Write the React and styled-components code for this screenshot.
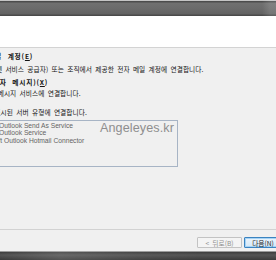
import React from "react";
import styled, { createGlobalStyle } from "styled-components";

const Global = createGlobalStyle`
  html, body { margin: 0; padding: 0; width: 276px; height: 260px; overflow: hidden; background: #f0f0f0; }
  #root { width: 276px; height: 260px; }
`;

const Window = styled.div`
  width: 276px;
  height: 260px;
  display: flex;
  flex-direction: column;
  overflow: hidden;
  font-family: "Noto Sans CJK KR", "Noto Sans", sans-serif;
  color: #1f1f1f;
`;

const TitleBar = styled.div`
  height: 16px;
  flex: none;
  background:
    linear-gradient(to right, rgba(255,255,255,0) 0, rgba(255,255,255,0) 262px, rgba(255,255,255,0.12) 270px, rgba(255,255,255,0.12) 276px),
    linear-gradient(to bottom, #c4c4c4 0, #c4c4c4 1px, #4c4c4c 1px, #4c4c4c 2px, #707070 3px, #6a6a6a 9px, #626262 14px, #4a4a4a 15px, #4a4a4a 16px);
`;

const Header = styled.div`
  height: 31px;
  flex: none;
  background: #ffffff;
  border-bottom: 1px solid #d3d3d3;
`;

const Body = styled.div`
  position: relative;
  flex: 1;
  display: flex;
  flex-direction: column;
  padding-top: 3px;
  background: #f0f0f0;
`;

const Line = styled.div`
  white-space: nowrap;
  font-size: 6.7px;
  line-height: 10px;
  height: 10px;
  word-spacing: ${(p) => (p.$bold ? "0.5em" : "0.26em")};
  letter-spacing: ${(p) => (p.$bold ? "0.8px" : "0.05px")};
  font-weight: ${(p) => (p.$bold ? 700 : 400)};
  margin-left: ${(p) => p.$offset}px;
  margin-top: ${(p) => p.$gap || 0}px;
  color: #141414;
`;

const Key = styled.span`
  text-decoration: underline;
`;

const ListBox = styled.div`
  margin-top: 3px;
  margin-left: -30px;
  width: 208px;
  height: 47px;
  box-sizing: border-box;
  border: 1px solid #a7b4c5;
  padding: 0.5px 0 0 29px;
  display: flex;
  flex-direction: column;
`;

const Item = styled.div`
  white-space: nowrap;
  font-family: "Liberation Sans", Arial, sans-serif;
  font-size: 6.7px;
  line-height: 7.5px;
  height: 7.5px;
  color: #646464;
  margin-left: ${(p) => p.$offset || 0}px;
`;

const Watermark = styled.div`
  position: absolute;
  left: 100px;
  top: 73px;
  font-family: "Liberation Sans", Arial, sans-serif;
  font-size: 12.6px;
  color: #8e8e8e;
  letter-spacing: 0.1px;
`;

const Footer = styled.div`
  flex: none;
  height: 22px;
  box-sizing: border-box;
  border-top: 1px solid #d2d2d2;
  display: flex;
  align-items: flex-start;
  gap: 2px;
  padding: 7px 0 0 197px;
  background: #f0f0f0;
`;

const Button = styled.div`
  flex: none;
  width: 45px;
  height: 11px;
  box-sizing: border-box;
  display: flex;
  align-items: center;
  justify-content: center;
  font-size: 6.7px;
  word-spacing: 0.26em;
  white-space: nowrap;
  border: 1px solid ${(p) => (p.$primary ? "#3b83c0" : "#c3c3c3")};
  border-radius: 1px;
  color: ${(p) => (p.$primary ? "#1e1e1e" : "#8e8e8e")};
  background: ${(p) =>
    p.$primary
      ? "linear-gradient(to bottom, #eaf4fc, #d5e8f7)"
      : "#f4f4f4"};
  box-shadow: ${(p) => (p.$primary ? "inset 0 0 0 1px #a6d3f5" : "none")};
`;

const BottomBar = styled.div`
  height: 9px;
  flex: none;
  background:
    linear-gradient(to right, rgba(255,255,255,0) 0, rgba(255,255,255,0.12) 60px, rgba(255,255,255,0.04) 140px, rgba(255,255,255,0) 200px),
    linear-gradient(to bottom, #9a9a9a 0, #9a9a9a 1px, #3c3c3c 1px, #555 4px, #3a3a3a 9px);
`;

export default function App() {
  return (
    <>
      <Global />
      <Window>
        <TitleBar />
        <Header />
        <Body>
          <Line $bold $offset={-31.5}>
            전자 메일 계정(<Key>E</Key>)
          </Line>
          <Line $offset={-16.5} $gap={2.5}>
            인터넷 서비스 공급자) 또는 조직에서 제공한 전자 메일 계정에 연결합니다.
          </Line>
          <Line $bold $offset={-10.6} $gap={3.5}>
            (문자 메시지)(<Key>X</Key>)
          </Line>
          <Line $offset={-18} $gap={1}>
            문자 메시지 서비스에 연결합니다.
          </Line>
          <Line $offset={-5.6} $gap={9}>
            표시된 서버 유형에 연결합니다.
          </Line>
          <ListBox>
            <Item $offset={-1}>Outlook Send As Service</Item>
            <Item $offset={-1}>Outlook Service</Item>
            <Item $offset={-25}>Microsoft Outlook Hotmail Connector</Item>
          </ListBox>
          <Watermark>Angeleyes.kr</Watermark>
        </Body>
        <Footer>
          <Button>&lt; 뒤로(B)</Button>
          <Button $primary>다음(N) &gt;</Button>
        </Footer>
        <BottomBar />
      </Window>
    </>
  );
}
